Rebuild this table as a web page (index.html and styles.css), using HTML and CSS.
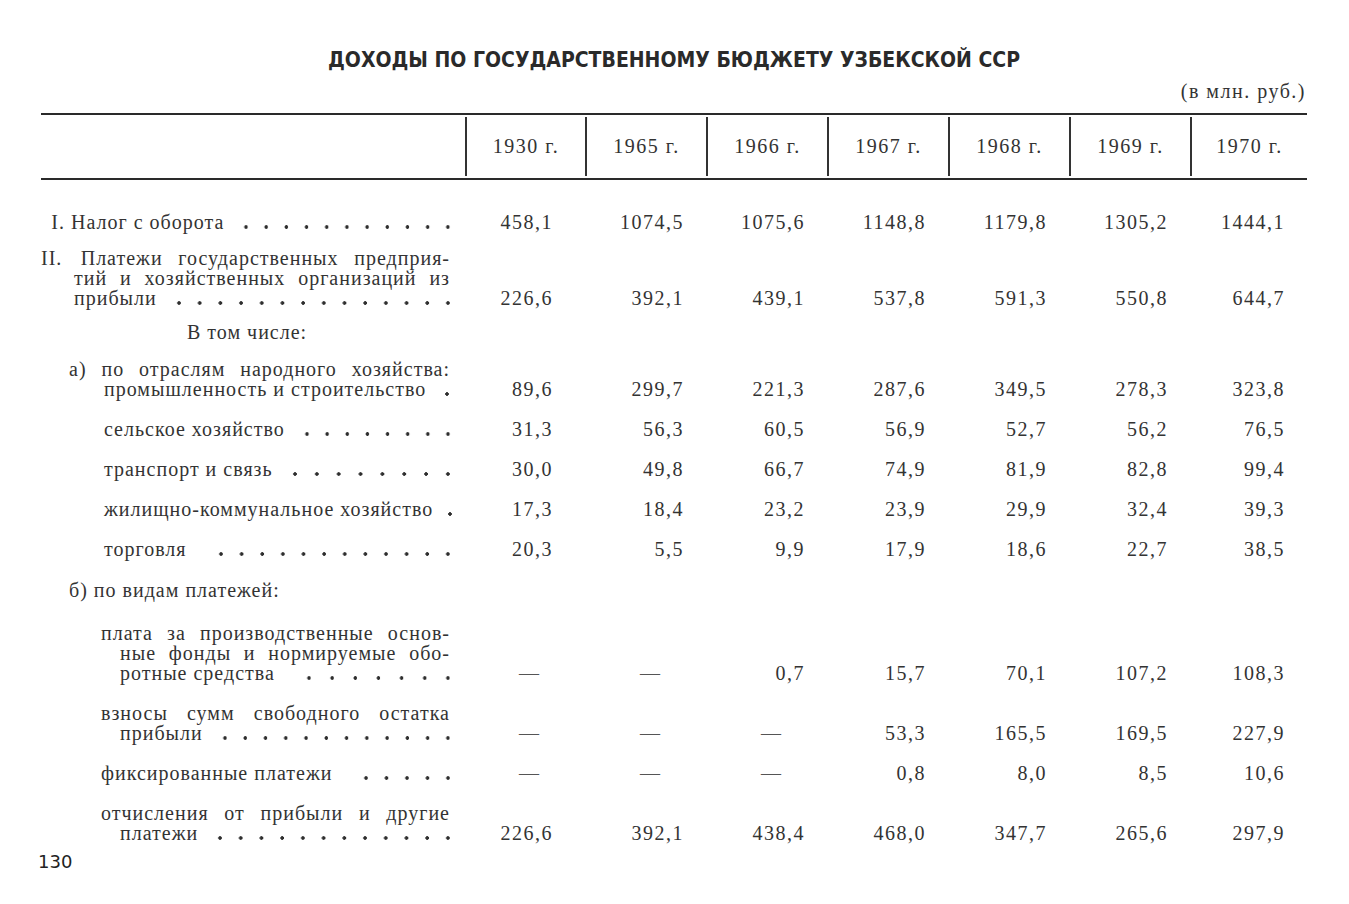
FILE: index.html
```
<!DOCTYPE html>
<html lang="ru">
<head>
<meta charset="utf-8">
<title>Доходы по государственному бюджету Узбекской ССР</title>
<link rel="stylesheet" href="styles.css">
</head>
<body>
<div class="page">
  <h1 class="title">ДОХОДЫ ПО ГОСУДАРСТВЕННОМУ БЮДЖЕТУ УЗБЕКСКОЙ ССР</h1>
  <div class="units">(в млн. руб.)</div>

  <div class="table">
    <div class="head">
      <div class="hcell hfirst"></div>
      <div class="hcell">1930 г.</div>
      <div class="hcell">1965 г.</div>
      <div class="hcell">1966 г.</div>
      <div class="hcell">1967 г.</div>
      <div class="hcell">1968 г.</div>
      <div class="hcell">1969 г.</div>
      <div class="hcell">1970 г.</div>
    </div>

    <div class="body">
      <div class="row first">
        <div class="lbl">
          <div class="ln lead"><span class="txt"><span class="num">I.</span> Налог с оборота</span><i class="dots"></i></div>
        </div>
        <div class="v v1">458,1</div><div class="v">1074,5</div><div class="v">1075,6</div><div class="v">1148,8</div><div class="v">1179,8</div><div class="v">1305,2</div><div class="v">1444,1</div>
      </div>

      <div class="row g16">
        <div class="lbl">
          <div class="ln just"><span class="num">II.</span> Платежи государственных предприя-</div>
          <div class="ln just in-a">тий и хозяйственных организаций из</div>
          <div class="ln lead in-a"><span class="txt">прибыли</span><i class="dots"></i></div>
        </div>
        <div class="v v1">226,6</div><div class="v">392,1</div><div class="v">439,1</div><div class="v">537,8</div><div class="v">591,3</div><div class="v">550,8</div><div class="v">644,7</div>
      </div>

      <div class="row g14">
        <div class="lbl">
          <div class="ln in-sub">В том числе:</div>
        </div>
      </div>

      <div class="row g17">
        <div class="lbl">
          <div class="ln just in-b">а) по отраслям народного хозяйства:</div>
          <div class="ln lead in-c"><span class="txt">промышленность и строительство</span><i class="dots one"></i></div>
        </div>
        <div class="v v1">89,6</div><div class="v">299,7</div><div class="v">221,3</div><div class="v">287,6</div><div class="v">349,5</div><div class="v">278,3</div><div class="v">323,8</div>
      </div>

      <div class="row">
        <div class="lbl">
          <div class="ln lead in-c"><span class="txt">сельское хозяйство</span><i class="dots"></i></div>
        </div>
        <div class="v v1">31,3</div><div class="v">56,3</div><div class="v">60,5</div><div class="v">56,9</div><div class="v">52,7</div><div class="v">56,2</div><div class="v">76,5</div>
      </div>

      <div class="row">
        <div class="lbl">
          <div class="ln lead in-c"><span class="txt">транспорт и связь</span><i class="dots"></i></div>
        </div>
        <div class="v v1">30,0</div><div class="v">49,8</div><div class="v">66,7</div><div class="v">74,9</div><div class="v">81,9</div><div class="v">82,8</div><div class="v">99,4</div>
      </div>

      <div class="row">
        <div class="lbl">
          <div class="ln lead in-c"><span class="txt">жилищно-коммунальное хозяйство</span><i class="dots one"></i></div>
        </div>
        <div class="v v1">17,3</div><div class="v">18,4</div><div class="v">23,2</div><div class="v">23,9</div><div class="v">29,9</div><div class="v">32,4</div><div class="v">39,3</div>
      </div>

      <div class="row">
        <div class="lbl">
          <div class="ln lead in-c"><span class="txt">торговля</span><i class="dots wide"></i></div>
        </div>
        <div class="v v1">20,3</div><div class="v">5,5</div><div class="v">9,9</div><div class="v">17,9</div><div class="v">18,6</div><div class="v">22,7</div><div class="v">38,5</div>
      </div>

      <div class="row g21">
        <div class="lbl">
          <div class="ln in-b">б) по видам платежей:</div>
        </div>
      </div>

      <div class="row g23">
        <div class="lbl">
          <div class="ln just in-d">плата за производственные основ-</div>
          <div class="ln just in-e">ные фонды и нормируемые обо-</div>
          <div class="ln lead in-e"><span class="txt">ротные средства</span><i class="dots wide"></i></div>
        </div>
        <div class="v v1 dash">—</div><div class="v dash">—</div><div class="v">0,7</div><div class="v">15,7</div><div class="v">70,1</div><div class="v">107,2</div><div class="v">108,3</div>
      </div>

      <div class="row">
        <div class="lbl">
          <div class="ln just in-d">взносы сумм свободного остатка</div>
          <div class="ln lead in-e"><span class="txt">прибыли</span><i class="dots"></i></div>
        </div>
        <div class="v v1 dash">—</div><div class="v dash">—</div><div class="v dash">—</div><div class="v">53,3</div><div class="v">165,5</div><div class="v">169,5</div><div class="v">227,9</div>
      </div>

      <div class="row">
        <div class="lbl">
          <div class="ln lead in-d"><span class="txt">фиксированные платежи</span><i class="dots wide"></i></div>
        </div>
        <div class="v v1 dash">—</div><div class="v dash">—</div><div class="v dash">—</div><div class="v">0,8</div><div class="v">8,0</div><div class="v">8,5</div><div class="v">10,6</div>
      </div>

      <div class="row">
        <div class="lbl">
          <div class="ln just in-d">отчисления от прибыли и другие</div>
          <div class="ln lead in-e"><span class="txt">платежи</span><i class="dots"></i></div>
        </div>
        <div class="v v1">226,6</div><div class="v">392,1</div><div class="v">438,4</div><div class="v">468,0</div><div class="v">347,7</div><div class="v">265,6</div><div class="v">297,9</div>
      </div>
    </div>
  </div>

  <div class="pageno">130</div>
</div>
</body>
</html>
```
FILE: styles.css
```
html, body {
  margin: 0;
  padding: 0;
  background: #ffffff;
}

body {
  font-family: "Liberation Serif", "Times New Roman", serif;
  color: #333333;
}

.page {
  width: 1266px;
  padding: 48px 0 0 41px;
}

.title {
  margin: 0;
  font-family: "DejaVu Sans Condensed", "Liberation Sans Narrow", "Liberation Sans", sans-serif;
  font-stretch: condensed;
  font-weight: bold;
  font-size: 21px;
  line-height: 24px;
  letter-spacing: 0;
  color: #2a2a2a;
  text-align: center;
}

.units {
  margin-top: 9px;
  font-size: 20px;
  line-height: 20px;
  letter-spacing: 1.5px;
  text-align: right;
  padding-right: 1px;
}

.table {
  margin-top: 12px;
}

.head {
  display: grid;
  grid-template-columns: 424px 120px 121px 121px 121px 121px 121px 117px;
  border-top: 2px solid #2a2a2a;
  border-bottom: 2px solid #2a2a2a;
  padding: 2px 0;
}

.hcell {
  height: 59px;
  display: flex;
  align-items: center;
  justify-content: center;
  border-left: 2px solid #333333;
  font-size: 20px;
  letter-spacing: 1.5px;
}

.hfirst {
  border-left: none;
}

.body {
  padding-top: 32px;
}

.row {
  display: grid;
  grid-template-columns: 424px 120px 121px 121px 121px 121px 121px 117px;
  align-items: end;
  margin-top: 20px;
  font-size: 20px;
  line-height: 20px;
  letter-spacing: 1.5px;
}

.row.first { margin-top: 0; }
.row.g14 { margin-top: 14px; }
.row.g16 { margin-top: 16px; }
.row.g17 { margin-top: 17px; }
.row.g21 { margin-top: 21px; }
.row.g23 { margin-top: 23px; }

.lbl {
  padding-right: 15px;
  letter-spacing: 1px;
}

.ln {
  height: 20px;
  white-space: nowrap;
}

.ln.just {
  white-space: normal;
  text-align: justify;
  text-align-last: justify;
}

.ln.lead {
  display: flex;
  align-items: stretch;
}

.txt {
  white-space: nowrap;
}

.num {
  display: inline-block;
  width: 24px;
  text-align: right;
  letter-spacing: 1px;
}

.in-a { padding-left: 33px; }
.in-b { padding-left: 28px; }
.in-c { padding-left: 63px; }
.in-d { padding-left: 60px; }
.in-e { padding-left: 79px; }
.in-sub { padding-left: 146px; }

.dots {
  flex: 1;
  min-width: 0;
  margin-left: 12px;
  margin-right: -8px;
  background-image: radial-gradient(circle at center, #2e2e2e 1.5px, rgba(255,255,255,0) 2.1px);
  background-size: 20px 6px;
  background-repeat: space no-repeat;
  background-position: right 0 bottom 2px;
}

.dots.wide {
  margin-left: 24px;
}

.dots.one {
  flex: 1 0 8px;
  margin-right: 0;
  background-repeat: no-repeat;
  background-size: 6px 6px;
  background-position: right 0 bottom 2px;
}

.v {
  text-align: right;
  padding-right: 22px;
}

.v.v1 {
  padding-right: 32px;
}

.v.dash {
  padding-right: 46px;
  letter-spacing: 0;
  color: #555555;
}

.pageno {
  margin: 9px 0 0 -3px;
  font-family: "DejaVu Sans", "Liberation Sans", sans-serif;
  font-size: 18px;
  line-height: 20px;
  color: #222222;
}
```
